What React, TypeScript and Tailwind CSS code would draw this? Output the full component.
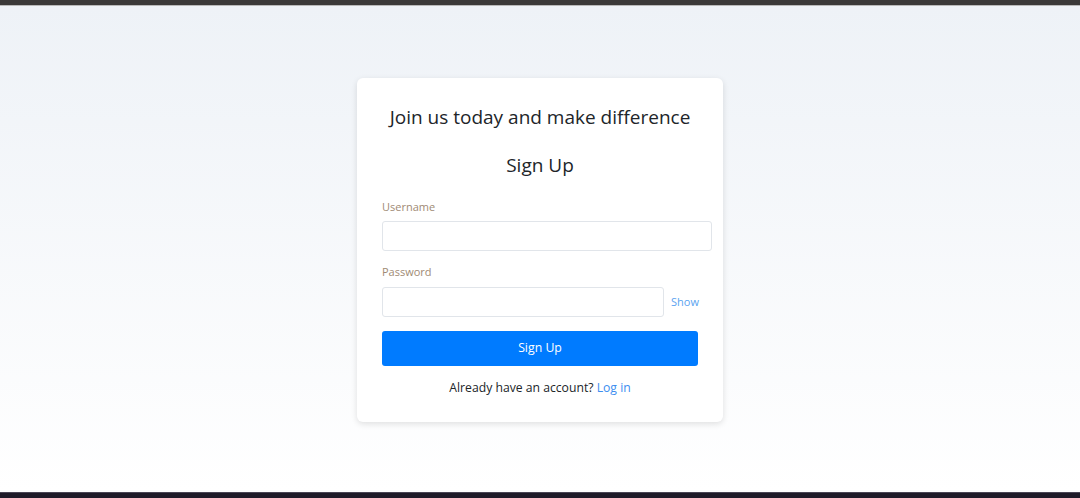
import React, { useState } from 'react';

const App: React.FC = () => {
  const [show, setShow] = useState(false);

  return (
    <div className="h-[498px] w-full flex flex-col overflow-hidden" style={{ fontFamily: '"Open Sans", "Noto Sans", sans-serif' }}>
      <div className="h-[5px] bg-[#3b3939] shrink-0" />
      <div className="h-px bg-[#b9b9b9] shrink-0" />

      <main className="flex-1 flex items-center justify-center bg-gradient-to-b from-[#eef2f7] to-white">
        <div className="mt-[2px] w-[366px] h-[344px] bg-white rounded-md shadow-[0_2px_6px_rgba(0,0,0,0.12)] pt-[25px] pl-[25px] pr-[25px]">
          <h1 className="text-[19px] leading-[28px] text-[#212529] text-center whitespace-nowrap">Join us today and make difference</h1>
          <h2 className="mt-[20px] text-[19px] leading-[28px] text-[#212529] text-center">Sign Up</h2>

          <form className="mt-[20px]" onSubmit={(e) => e.preventDefault()}>
            <label className="block text-[11px] leading-[16px] text-[#a08a74]">Username</label>
            <input type="text" className="mt-[6px] block w-[330px] h-[30px] border border-[#e1e5ea] rounded-[3px] px-2 text-sm outline-none" />

            <label className="block mt-[13px] text-[11px] leading-[16px] text-[#a08a74]">Password</label>
            <div className="mt-[7px] flex items-center gap-[7px] whitespace-nowrap">
              <input type={show ? 'text' : 'password'} className="shrink-0 w-[282px] h-[30px] border border-[#e1e5ea] rounded-[3px] px-2 text-sm outline-none" />
              <button type="button" onClick={() => setShow(!show)} className="shrink-0 text-[11px] text-[#5aa3f0]">
                {show ? 'Hide' : 'Show'}
              </button>
            </div>

            <button type="submit" className="mt-[14px] w-[316px] h-[35px] bg-[#007bff] text-white text-[12.3px] rounded-[3px]">
              Sign Up
            </button>
          </form>

          <p className="mt-[12px] text-center text-[12.2px] leading-[20px] text-[#212529]">
            Already have an account? <a href="#" className="text-[#3d8ef0]">Log in</a>
          </p>
        </div>
      </main>

      <div className="h-[6px] bg-[#1f1b29] shrink-0 border-t border-[#4a4656]" />
    </div>
  );
};

export default App;
